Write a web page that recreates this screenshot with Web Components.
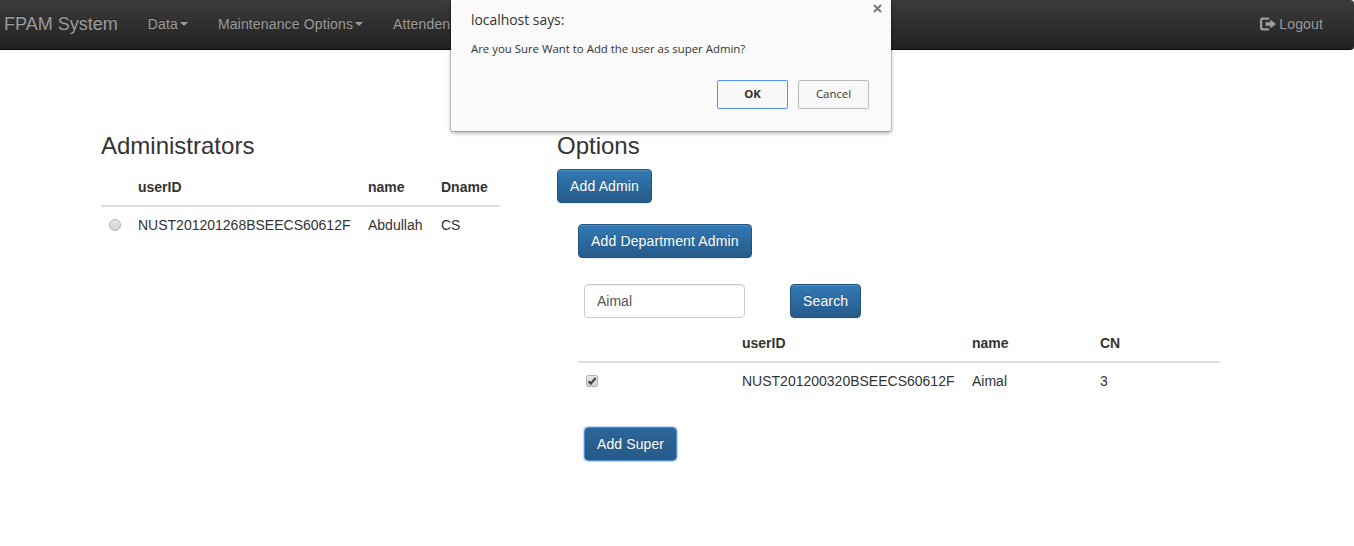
<!DOCTYPE html>
<html>
<head>
<meta charset="utf-8">
<title>FPAM System</title>
<style>
  html, body { margin: 0; padding: 0; background: #fff; }
  body { font: 14px/20px "Liberation Sans", Arial, sans-serif; color: #333; height: 546px; overflow: hidden; }
  fp-button.super { margin: 27px 0 0 6px; letter-spacing: .1px; }
</style>
</head>
<body>
<fp-navbar brand="FPAM System">
  <fp-nav-item caret>Data</fp-nav-item>
  <fp-nav-item caret>Maintenance Options</fp-nav-item>
  <fp-nav-item>Attendence</fp-nav-item>
  <fp-nav-item slot="right" icon="logout">Logout</fp-nav-item>
</fp-navbar>

<fp-page>
  <fp-panel slot="left" heading="Administrators">
    <fp-table columns="29px 230px 73px 67px" headers=",userID,name,Dname">
      <fp-row><fp-check type="radio"></fp-check><span>NUST201201268BSEECS60612F</span><span>Abdullah</span><span>CS</span></fp-row>
    </fp-table>
  </fp-panel>
  <fp-panel slot="right" heading="Options">
    <fp-button>Add Admin</fp-button>
    <fp-options-body>
      <fp-button>Add Department Admin</fp-button>
      <fp-search value="Aimal"></fp-search>
      <fp-table columns="156px 230px 128px 128px" headers=",userID,name,CN">
        <fp-row><fp-check type="checkbox" checked></fp-check><span>NUST201200320BSEECS60612F</span><span>Aimal</span><span>3</span></fp-row>
      </fp-table>
      <fp-button focused class="super">Add Super</fp-button>
    </fp-options-body>
  </fp-panel>
</fp-page>

<fp-alert host="localhost says:" message="Are you Sure Want to Add the user as super Admin?"></fp-alert>

<script>
class FpNavbar extends HTMLElement {
    constructor() {
        super();
        this.attachShadow({ mode: 'open' });
        this.shadowRoot.innerHTML = `
      <style>
        :host {
          display: flex;
          align-items: stretch;
          height: 50px;
          box-sizing: border-box;
          border-bottom: 1px solid #080808;
          border-radius: 0 4px 4px 0;
          background: linear-gradient(to bottom, #3c3c3c 0, #222 100%);
        }
        .brand {
          padding: 0 15px 0 4px;
          margin-right: 0;
          font-size: 18px;
          line-height: 48px;
          color: #9d9d9d;
          text-shadow: 0 -1px 0 rgba(0, 0, 0, .25);
        }
        .left { display: flex; }
        .right { display: flex; margin-left: auto; margin-right: 16px; }
      </style>
      <span class="brand"></span>
      <div class="left"><slot></slot></div>
      <div class="right"><slot name="right"></slot></div>
    `;
        this.shadowRoot.querySelector('.brand').textContent = this.getAttribute('brand');
    }
}

class FpNavItem extends HTMLElement {
    constructor() {
        super();
        this.attachShadow({ mode: 'open' });
        const caret = this.hasAttribute('caret') ? '<i class="caret"></i>' : '';
        const icon = this.getAttribute('icon') === 'logout'
            ? `<svg width="16" height="14" viewBox="0 0 16 14"><path fill="#9d9d9d" d="M0 3C0 1.6 1.1.5 2.5.5H9v2.2H3c-.5 0-.8.3-.8.8v7c0 .5.3.8.8.8h6v2.2H2.5C1.100 13.500 0 12.400 0 11z"/><path fill="#9d9d9d" d="M5.500 5.200h4.700V2.600L16 7l-5.800 4.400V8.800H5.500z"/></svg>`
            : '';
        this.shadowRoot.innerHTML = `
      <style>
        :host {
          display: flex;
          align-items: center;
          gap: 3px;
          padding: 0 15px;
          height: 48px;
          color: #9d9d9d;
          font-size: 14px;
          letter-spacing: .15px;
          white-space: nowrap;
          text-shadow: 0 -1px 0 rgba(0, 0, 0, .25);
        }
        .caret {
          width: 0;
          height: 0;
          margin-left: -1px;
          border-top: 4px solid #9d9d9d;
          border-left: 4px solid transparent;
          border-right: 4px solid transparent;
        }
        svg { display: block; }
      </style>
      ${icon}<slot></slot>${caret}
    `;
    }
}

class FpPage extends HTMLElement {
    constructor() {
        super();
        this.attachShadow({ mode: 'open' });
        this.shadowRoot.innerHTML = `
      <style>
        :host {
          display: grid;
          grid-template-columns: 399px 663px;
          column-gap: 57px;
          padding: 63px 0 0 101px;
        }
      </style>
      <slot name="left"></slot>
      <slot name="right"></slot>
    `;
    }
}

class FpPanel extends HTMLElement {
    constructor() {
        super();
        this.attachShadow({ mode: 'open' });
        this.shadowRoot.innerHTML = `
      <style>
        :host { display: block; }
        h3 {
          margin: 20px 0 10px;
          font-size: 24px;
          font-weight: 500;
          line-height: 26.4px;
          color: #333;
        }
      </style>
      <h3></h3>
      <slot></slot>
    `;
        this.shadowRoot.querySelector('h3').textContent = this.getAttribute('heading');
    }
}

class FpOptionsBody extends HTMLElement {
    constructor() {
        super();
        this.attachShadow({ mode: 'open' });
        this.shadowRoot.innerHTML = `
      <style>
        :host { display: block; margin-left: 21px; padding-top: 21px; }
      </style>
      <slot></slot>
    `;
    }
}

class FpButton extends HTMLElement {
    constructor() {
        super();
        this.attachShadow({ mode: 'open' });
        this.shadowRoot.innerHTML = `
      <style>
        :host {
          display: block;
          width: fit-content;
          box-sizing: border-box;
          height: 34px;
          padding: 6px 12px;
          border: 1px solid #245580;
          border-radius: 4px;
          color: #fff;
          font-size: 14px;
          line-height: 20px;
          letter-spacing: .15px;
          white-space: nowrap;
          text-shadow: 0 -1px 0 rgba(0, 0, 0, .2);
          background: linear-gradient(to bottom, #337ab7 0, #265a88 100%);
          box-shadow: inset 0 1px 0 rgba(255, 255, 255, .15), 0 1px 1px rgba(0, 0, 0, .075);
        }
        :host([focused]) {
          background: linear-gradient(to bottom, #2b6698 0, #265a88 100%);
          border-color: #4d90d8;
          box-shadow: 0 0 0 1px rgba(110, 166, 232, .45);
        }
      </style>
      <slot></slot>
    `;
    }
}

class FpSearch extends HTMLElement {
    constructor() {
        super();
        this.attachShadow({ mode: 'open' });
        this.shadowRoot.innerHTML = `
      <style>
        :host {
          display: flex;
          gap: 45px;
          margin: 26px 0 7px 6px;
        }
        input {
          width: 161px;
          height: 34px;
          box-sizing: border-box;
          padding: 6px 12px;
          border: 1px solid #ccc;
          border-radius: 4px;
          background: #fff;
          color: #555;
          font: 14px/20px "Liberation Sans", Arial, sans-serif;
          box-shadow: inset 0 1px 1px rgba(0, 0, 0, .075);
        }
      </style>
      <input type="text">
      <fp-button>Search</fp-button>
    `;
        this.shadowRoot.querySelector('input').setAttribute('value', this.getAttribute('value'));
    }
}

class FpTable extends HTMLElement {
    constructor() {
        super();
        this.attachShadow({ mode: 'open' });
        const heads = this.getAttribute('headers').split(',').map(h => `<span>${h}</span>`).join('');
        this.shadowRoot.innerHTML = `
      <style>
        :host { display: block; --cols: ${this.getAttribute('columns')}; }
        .head {
          display: grid;
          grid-template-columns: var(--cols);
          height: 38px;
          box-sizing: border-box;
          border-bottom: 2px solid #ddd;
          font-weight: 700;
          color: #333;
        }
        .head span { padding: 8px; white-space: nowrap; }
      </style>
      <div class="head">${heads}</div>
      <slot></slot>
    `;
    }
}

class FpRow extends HTMLElement {
    constructor() {
        super();
        this.attachShadow({ mode: 'open' });
        this.shadowRoot.innerHTML = `
      <style>
        :host {
          display: grid;
          grid-template-columns: var(--cols);
          height: 37px;
        }
        ::slotted(*) { padding: 8px; white-space: nowrap; }
      </style>
      <slot></slot>
    `;
    }
}

class FpCheck extends HTMLElement {
    constructor() {
        super();
        this.attachShadow({ mode: 'open' });
        const radio = this.getAttribute('type') === 'radio';
        const tick = this.hasAttribute('checked')
            ? `<svg width="12" height="12" viewBox="0 0 12 12"><path d="M2.6 6.4 4.8 8.6 9.6 3" fill="none" stroke="#444" stroke-width="2.2"/></svg>`
            : '';
        this.shadowRoot.innerHTML = `
      <style>
        :host { display: block; }
        .box {
          display: block;
          width: 12px;
          height: 12px;
          box-sizing: border-box;
          margin-top: 4px;
          border: 1px solid #b4b4b4;
          border-radius: ${radio ? '50%' : '2px'};
          background: linear-gradient(to bottom, #e6e6e6, #d2d2d2);
        }
        svg { display: block; margin: -1px; }
      </style>
      <span class="box">${tick}</span>
    `;
    }
}

class FpAlert extends HTMLElement {
    constructor() {
        super();
        this.attachShadow({ mode: 'open' });
        this.shadowRoot.innerHTML = `
      <style>
        :host {
          position: absolute;
          left: 451px;
          top: 0;
          width: 440px;
          height: 131px;
          box-sizing: border-box;
          padding: 11px 22px 0 20px;
          background: #fafafa;
          border-radius: 0 0 2px 2px;
          box-shadow: 0 0 0 1px rgba(0, 0, 0, .15), 0 2px 4px rgba(0, 0, 0, .35);
          font-family: "Open Sans", "Noto Sans", sans-serif;
          color: #333;
          display: flex;
          flex-direction: column;
        }
        .host { font-size: 13.9px; line-height: 18px; color: #333; }
        .msg { margin-top: 12px; font-size: 11.4px; line-height: 16px; color: #333; }
        .close {
          position: absolute;
          top: 4px;
          right: 9px;
          display: block;
        }
        .actions {
          display: flex;
          justify-content: flex-end;
          gap: 10px;
          margin-top: 23px;
        }
        button {
          width: 71px;
          height: 29px;
          padding: 0 0 3px;
          box-sizing: border-box;
          border: 1px solid #bbb;
          border-radius: 2px;
          background: #f7f7f7;
          color: #333;
          font: 11.4px "Open Sans", "Noto Sans", sans-serif;
        }
        button.ok { border-color: #4d90fe; font-weight: 700; }
      </style>
      <div class="host"></div>
      <div class="msg"></div>
      <svg class="close" width="9" height="9" viewBox="0 0 9 9"><path d="M1 1 8 8M8 1 1 8" stroke="#777" stroke-width="2" fill="none"/></svg>
      <div class="actions">
        <button class="ok">OK</button>
        <button>Cancel</button>
      </div>
    `;
        this.shadowRoot.querySelector('.host').textContent = this.getAttribute('host');
        this.shadowRoot.querySelector('.msg').textContent = this.getAttribute('message');
    }
}

customElements.define('fp-navbar', FpNavbar);
customElements.define('fp-nav-item', FpNavItem);
customElements.define('fp-page', FpPage);
customElements.define('fp-panel', FpPanel);
customElements.define('fp-options-body', FpOptionsBody);
customElements.define('fp-button', FpButton);
customElements.define('fp-search', FpSearch);
customElements.define('fp-table', FpTable);
customElements.define('fp-row', FpRow);
customElements.define('fp-check', FpCheck);
customElements.define('fp-alert', FpAlert);
</script>
</body>
</html>
